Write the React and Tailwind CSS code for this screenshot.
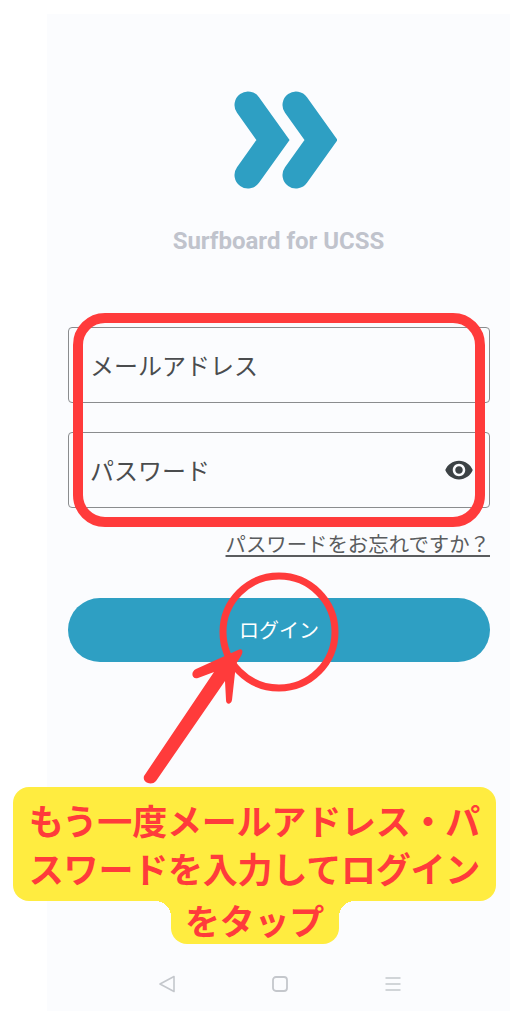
import React from 'react';

const jp = "font-['Noto_Sans_CJK_JP','Noto_Sans',sans-serif]";

const Logo = () => (
  <svg width="104" height="98" viewBox="0 0 104 98" className="ml-[186px]">
    <path d="M15 14 L40 49 L15 84" fill="none" stroke="#2e9fc3" strokeWidth="27" strokeLinecap="round" strokeLinejoin="miter" />
    <path d="M63 14 L88 49 L63 84" fill="none" stroke="#2e9fc3" strokeWidth="27" strokeLinecap="round" strokeLinejoin="miter" />
  </svg>
);

const Field = ({ label, children }) => (
  <div className="flex items-center justify-between h-[76px] border border-[#8a8c8e] rounded-[4px] pl-[21px] pr-[15px]">
    <span className={`${jp} text-[24px] text-[#4a4c4e] leading-none`}>{label}</span>
    {children}
  </div>
);

const EyeIcon = () => (
  <svg width="30" height="30" viewBox="0 0 24 24" fill="#3c4245">
    <path d="M12 4.5C7 4.5 2.73 7.61 1 12c1.73 4.39 6 7.5 11 7.5s9.27-3.11 11-7.5c-1.73-4.39-6-7.5-11-7.5zM12 17c-2.76 0-5-2.24-5-5s2.24-5 5-5 5 2.24 5 5-2.24 5-5 5zm0-8c-1.66 0-3 1.34-3 3s1.34 3 3 3 3-1.34 3-3-1.34-3-3-3z" />
  </svg>
);

const NavBar = () => (
  <div className="flex items-center justify-center gap-[95px] mt-auto mb-[18px] pl-[2px]">
    <svg width="18" height="18" viewBox="0 0 18 18" fill="none" stroke="#c4c7cc" strokeWidth="1.6" strokeLinejoin="round">
      <path d="M16 1.5 L2 9 L16 16.5 Z" />
    </svg>
    <svg width="18" height="18" viewBox="0 0 18 18" fill="none" stroke="#c4c7cc" strokeWidth="1.8">
      <rect x="2" y="2" width="14" height="14" rx="3" />
    </svg>
    <svg width="18" height="18" viewBox="0 0 18 18" fill="none" stroke="#c4c7cc" strokeWidth="1.4">
      <path d="M1.5 3 H16.5 M1.5 9 H16.5 M1.5 15 H16.5" />
    </svg>
  </div>
);

const Annotations = () => (
  <svg width="524" height="790" viewBox="0 0 524 790" fill="none" className="absolute left-0 top-0 pointer-events-none">
    <rect x="78" y="318" width="402" height="204" rx="27" stroke="#ff3b3b" strokeWidth="10" />
    <circle cx="279" cy="632" r="56" stroke="#ff3b3b" strokeWidth="7" />
    <path
      d="M242 650 C243 652 242 654 241 656 L236 664 L232 700 C231 705 226 705 226 700 L225 681 L156 781 C152 786 142 783 144 776 L214 672 L198 678 C192 680 190 672 196 669 L238 650 C240 649 241 649 242 650 Z"
      fill="#ff3b3b"
    />
  </svg>
);

const Callout = () => (
  <div className={`${jp} absolute left-[13px] top-[787px] w-[483px] font-bold text-[#ff3b3b] text-[35px] leading-[48px] tracking-[-0.2px] text-center`}>
    <div className="bg-[#ffec40] rounded-[16px] h-[114px] pt-[9px] whitespace-nowrap">
      <div>もう一度メールアドレス・パ</div>
      <div>スワードを入力してログイン</div>
    </div>
    <div className="flex justify-center">
      <div className="w-[16px] h-[16px] bg-[radial-gradient(circle_at_0_100%,transparent_16px,#ffec40_16px)]" />
      <div className="w-[168px] h-[48px] bg-[#ffec40] rounded-b-[16px] -mt-[5px] pt-0 relative">をタップ</div>
      <div className="w-[16px] h-[16px] bg-[radial-gradient(circle_at_100%_100%,transparent_16px,#ffec40_16px)]" />
    </div>
  </div>
);

export default function App() {
  return (
    <div className="relative w-[524px] h-[1024px] bg-white overflow-hidden pt-[14px] pl-[47px]">
      <div className="flex flex-col w-[463px] h-[997px] bg-[#fbfcfe] pt-[77px]">
        <Logo />
        <h1 className="mt-[38px] text-center font-['Roboto',sans-serif] font-bold text-[24px] leading-[28px] text-[#c0c3cc]">
          Surfboard for UCSS
        </h1>
        <div className="mt-[72px] ml-[21px] mr-[20px] flex flex-col">
          <div className="flex flex-col gap-[29px]">
            <Field label="メールアドレス" />
            <Field label="パスワード">
              <EyeIcon />
            </Field>
          </div>
          <div className="flex justify-end mt-[20px]">
            <a className={`${jp} text-[20.4px] leading-[30px] text-[#5a5c5e] underline underline-offset-[3px]`}>
              パスワードをお忘れですか？
            </a>
          </div>
          <button className={`${jp} mt-[40px] h-[64px] rounded-full bg-[#2e9fc3] text-white text-[20px]`}>
            ログイン
          </button>
        </div>
        <NavBar />
      </div>
      <Annotations />
      <Callout />
    </div>
  );
}
